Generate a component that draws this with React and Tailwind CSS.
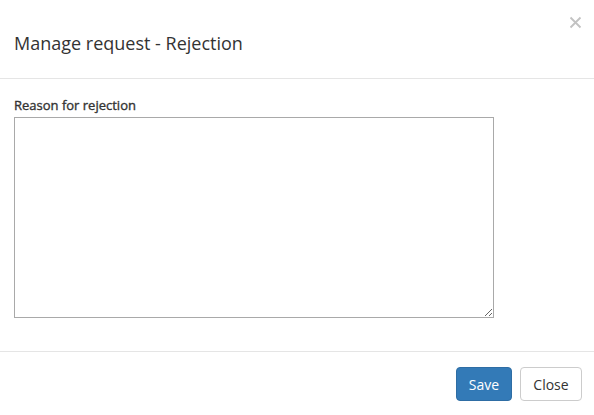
export default function App() {
    return (
        <div
            className="w-[594px] h-[415px] bg-white text-[#333] overflow-hidden"
            style={{ fontFamily: '"Open Sans", "Noto Sans", sans-serif' }}
        >
            {/* Header */}
            <div className="relative h-[79px] border-b border-[#e5e5e5] pl-[14px] pt-[30px]">
                <button
                    type="button"
                    className="absolute top-[16px] right-[12px] w-[13px] h-[13px] flex items-center justify-center"
                    aria-label="Close"
                >
                    <svg width="13" height="13" viewBox="0 0 13 13">
                        <path d="M1.5 1.5 L11.5 11.5 M11.5 1.5 L1.5 11.5" stroke="#c2c2c2" strokeWidth="1.8" fill="none" />
                    </svg>
                </button>
                <h4 className="text-[18px] leading-[26px] font-normal">Manage request - Rejection</h4>
            </div>

            {/* Body */}
            <div className="h-[272px] pl-[14px] pt-[16px]">
                <label className="block text-[13px] leading-[20px] font-normal [-webkit-text-stroke:0.35px] mb-[2px]">
                    Reason for rejection
                </label>
                <textarea className="block w-[480px] h-[201px] border border-[#a9a9a9] bg-white outline-none resize" />
            </div>

            {/* Footer */}
            <div className="border-t border-[#e5e5e5] flex justify-end gap-[8px] pt-[15px] pr-[12px]">
                <button
                    type="button"
                    className="w-[56px] h-[34px] rounded-[4px] border border-[#2e6da4] bg-[#337ab7] text-white text-[14px]"
                >
                    Save
                </button>
                <button
                    type="button"
                    className="w-[62px] h-[34px] rounded-[4px] border border-[#ccc] bg-white text-[#333] text-[14px]"
                >
                    Close
                </button>
            </div>
        </div>
    );
}
